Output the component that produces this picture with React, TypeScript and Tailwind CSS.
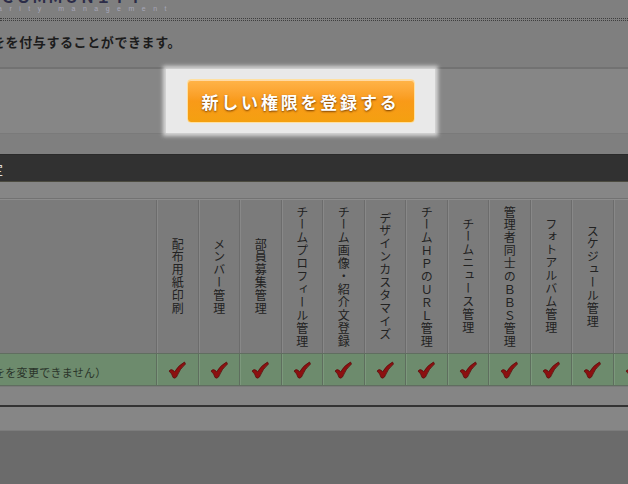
import React from "react";

const headers = [
  "配布用紙印刷",
  "メンバー管理",
  "部員募集管理",
  "チームプロフィール管理",
  "チーム画像・紹介文登録",
  "デザインカスタマイズ",
  "チームＨＰのＵＲＬ管理",
  "チームニュース管理",
  "管理者同士のＢＢＳ管理",
  "フォトアルバム管理",
  "スケジュール管理",
  "ファイル管理",
];

function Check() {
  return (
    <svg width="20" height="20" viewBox="0 0 20 20">
      <path
        d="M2 11 Q4 8.5 6.5 10.5 L7.5 12 Q11 5.5 17.5 2 L18.5 4 Q13 8.5 9.5 17 Q8 19 6 17.5 Q5 13.5 2 11 Z"
        fill="#8c1010"
        stroke="#560808"
        strokeWidth="0.7"
      />
    </svg>
  );
}

export default function App() {
  const jp = { fontFamily: '"Noto Sans CJK JP", "Noto Sans", sans-serif' };
  return (
    <div
      className="w-[628px] h-[484px] overflow-hidden bg-[#7f7f7f] flex flex-col"
      style={jp}
    >
      {/* logo remnants */}
      <div className="h-[4px] overflow-hidden flex items-end">
        <div className="text-[15px] leading-none font-bold text-[#2c2c48] tracking-[1px] whitespace-nowrap">
          ＣＯＭＭＵＮＩＴＹ
        </div>
      </div>
      <div
        className="h-[9px] flex items-center text-[7px] leading-none text-[#a6a6b8] tracking-[7.5px] whitespace-nowrap"
        style={{ fontFamily: '"Liberation Sans", sans-serif' }}
      >
        <span className="ml-[-2px]">arity management</span>
      </div>
      <div className="mt-[5px] h-[3px] border-y border-dotted border-[#3e3e3e]" />

      {/* description */}
      <div className="mt-[11px] h-[20px] flex items-center whitespace-nowrap">
        <span className="ml-[-8px] text-[13px] font-bold tracking-[0.6px] text-[#1c1c1c]">
          をを付与することができます。
        </span>
      </div>

      {/* button band */}
      <div className="mt-[15px] h-[67px] bg-[#868686] border-t-[2px] border-[#727272] border-b border-b-[#7a7a7a]">
        <div className="ml-[166px] w-[269px] h-[64px] bg-[#e9e9e9] shadow-[0_0_4px_3px_rgba(233,233,233,0.85)] flex items-center justify-center">
          <div className="w-[228px] h-[44px] rounded-[4px] border border-[#ffe0a0] bg-gradient-to-b from-[#ffb448] via-[#f99a18] to-[#f4a010] shadow-[inset_0_1px_0_rgba(255,255,255,0.5)] flex items-center justify-center">
            <span className="text-[17px] font-bold text-white tracking-[2.8px] [text-shadow:0_1px_2px_rgba(110,55,0,0.95)] leading-none">
              新しい権限を登録する
            </span>
          </div>
        </div>
      </div>

      {/* dark bar */}
      <div className="mt-[20px] h-[28px] bg-[#313131] border-t border-[#2a2a2a] border-b border-b-[#4c4b40] flex items-center">
        <span className="ml-[-10px] text-[13px] text-[#e0e0e0] leading-none">定</span>
      </div>
      <div className="h-[17px] bg-[#868686] border-b border-[#727272]" />

      {/* table header */}
      <div className="grid grid-cols-[157px_repeat(12,41.5px)] h-[154px] bg-[#7b7b7b] border-t border-[#8c8c8c]">
        <div className="border-r border-[#6c6c6c]" />
        {headers.map((h) => (
          <div
            key={h}
            className="border-r border-[#6c6c6c] shadow-[inset_1px_0_0_#888888] flex items-center justify-center"
          >
            <span className="[writing-mode:vertical-rl] text-[12px] leading-none tracking-[0.9px] text-[#222222] whitespace-nowrap">
              {h}
            </span>
          </div>
        ))}
      </div>

      {/* green row */}
      <div className="grid grid-cols-[157px_repeat(12,41.5px)] h-[33px] bg-[#6d8b6d] border-y border-[#606e60]">
        <div className="border-r border-[#5e6e5e] flex items-center overflow-hidden whitespace-nowrap">
          <span className="ml-[-6px] mt-[5px] text-[11px] text-[#2a342a] tracking-[0.3px]">
            をを変更できません）
          </span>
        </div>
        {headers.map((h) => (
          <div
            key={h}
            className="border-r border-[#5e6e5e] shadow-[inset_1px_0_0_#7c987c] flex items-center justify-center"
          >
            <Check />
          </div>
        ))}
      </div>

      <div className="h-[19px] bg-[#858585] border-t border-[#7a7a7a]" />
      <div className="h-[2px] bg-[#333333]" />
      <div className="h-[24px] bg-[#868686] border-b border-[#7c7c7c]" />
      <div className="flex-1 bg-[#6b6b6b]" />
    </div>
  );
}
